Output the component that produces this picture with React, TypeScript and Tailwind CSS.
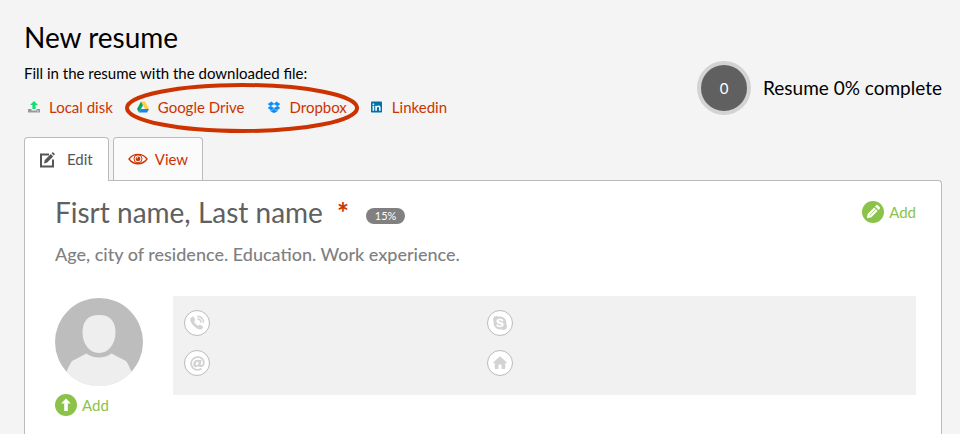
import type { ReactNode } from 'react';
import { FaAt, FaSkype } from 'react-icons/fa';
import { MdHome } from 'react-icons/md';

function LocalDiskIcon() {
  return (
    <svg viewBox="0 0 12 12" className="h-3 w-3">
      <path d="M6 0 10 4H7.600v4H4.400V4H2z" fill="#10e070" />
      <path d="M0 8h3.500v1.500h5V8H12v3.500H0z" fill="#999" />
      <path d="M9 9.600h1.600v.9H9z" fill="#ddd" />
    </svg>
  );
}

function DriveIcon() {
  return (
    <svg viewBox="0 0 12 12" className="h-3 w-3">
      <path d="M4 .5h4L12 8H8z" fill="#ffcf3f" />
      <path d="M4 .5 6 4.200 2 11.500 0 8z" fill="#11a15e" />
      <path d="M4 8h8l-2 3.500H2z" fill="#1a82f7" />
    </svg>
  );
}

function DropboxIcon() {
  return (
    <svg viewBox="0 0 12 12" className="h-3 w-3" fill="#0d8cf5" stroke="#0d8cf5" strokeWidth=".4">
      <path d="M3.500.8 6 2.900 2.500 5.100 0 3.100z" />
      <path d="M8.500.8 12 3.100 9.500 5.100 6 2.900z" />
      <path d="M2.500 5.100 6 7.300 3.500 9.300 0 7.100z" />
      <path d="M9.500 5.100 12 7.100 8.500 9.300 6 7.300z" />
      <path d="M6 8 8.500 10 9.600 9.400V10L6 12 2.400 10v-.6l1.100.6z" />
    </svg>
  );
}

function LinkedinIcon() {
  return (
    <svg viewBox="0 0 12 12" className="h-3 w-3">
      <rect x="0" y=".5" width="11" height="11" rx=".8" fill="#0072a8" />
      <path d="M1.600 4.700h1.600v5H1.600zM1.600 2.400h1.600V4H1.600z" fill="#fff" />
      <path d="M4.300 4.700h1.500v.7c.9-1.300 3.800-1.200 3.800 1.300v3H8V7c0-1.500-2.100-1.400-2.100 0v2.700H4.300z" fill="#fff" />
    </svg>
  );
}

function EditIcon() {
  return (
    <svg viewBox="0 0 16 16" className="h-4 w-4" fill="none" stroke="#555">
      <path d="M10 2.500H2v12h12V7.500" strokeWidth="2" />
      <path d="m5 11.500.8-3.500 6-6 2.400 2.400-6 6z" fill="#555" stroke="none" />
      <path d="m12.600 1.300 1.200-1.200L16 2.300l-1.200 1.200z" fill="#555" stroke="none" />
    </svg>
  );
}

function EyeIcon() {
  return (
    <svg viewBox="0 0 20 12" className="h-3 w-5" fill="none" stroke="#cc3300">
      <path d="M1 6C5.500-.3 14.500-.3 19 6 14.500 12.300 5.500 12.300 1 6z" strokeWidth="1.300" />
      <circle cx="10" cy="5.800" r="4" strokeWidth="1" />
      <circle cx="10" cy="5.800" r="2.400" fill="#cc3300" stroke="none" />
      <circle cx="9.200" cy="4.800" r=".7" fill="#fff" stroke="none" />
    </svg>
  );
}

function PhoneIcon() {
  return (
    <svg viewBox="0 0 16 16" className="h-4 w-4" fill="none" stroke="currentColor">
      <path
        d="M2.500 2.200C3.500 1.200 4.400 1.500 5 2.500l1 1.700c.4.700.2 1.400-.9 2.200.7 1.700 2.400 3.600 4.200 4.400.9-1 1.600-1.200 2.300-.8l1.800 1.200c.9.600 1.100 1.500.1 2.400-1.300 1.300-3.600 1.200-6.200-.6C4.300 11 2 8.300 1.400 5.800.9 4.100 1.500 3.100 2.500 2.200z"
        fill="currentColor"
        stroke="none"
      />
      <path d="M8.200 3.800c2.200.2 3.700 1.700 3.900 4" strokeWidth="1.500" />
      <path d="M8.200 1.200c3.700.2 6.200 2.700 6.400 6.600" strokeWidth="1.400" />
    </svg>
  );
}

function PencilBadge() {
  return (
    <svg viewBox="0 0 22 22" className="h-[22px] w-[22px]">
      <circle cx="11" cy="11" r="11" fill="#8bc34a" />
      <path d="m4.800 17.200 1-4.500 6.300-6.300 3.500 3.500-6.300 6.300z" fill="#fff" />
      <path d="m13 5.500 1.300-1.300a1 1 0 0 1 1.400 0l2.100 2.100a1 1 0 0 1 0 1.400L16.500 9z" fill="#fff" />
      <path d="m7.600 14.400 6-6" stroke="#8bc34a" strokeWidth=".7" />
    </svg>
  );
}

function UploadBadge() {
  return (
    <svg viewBox="0 0 22 22" className="h-[22px] w-[22px]">
      <circle cx="11" cy="11" r="11" fill="#8bc34a" />
      <path d="m11 4.500 4.800 5H12.800V17H9.200V9.500H6.200z" fill="#fff" />
    </svg>
  );
}

function Avatar() {
  return (
    <svg viewBox="0 0 88 88" className="h-[88px] w-[88px]" role="img" aria-label="Photo">
      <circle cx="44" cy="44" r="44" fill="#bdbdbd" />
      <path
        d="M44 17c11 0 16.500 6 16.500 17.500C60.500 46 53.500 55 44 55s-16.500-9-16.500-20.500C27.500 23 33 17 44 17z"
        fill="#eee"
      />
      <path
        d="M31.500 55.500c7 5.300 18 5.300 25 0L71 63c2 2.500 4 7 5.500 11A44 44 0 0 1 11.500 74C13 70 15 65.500 17 63z"
        fill="#eee"
      />
    </svg>
  );
}

function SourceLink({ icon, label }: { icon: ReactNode; label: string }) {
  return (
    <a href="#" className="flex items-center gap-[9px] text-[#cc3300]">
      {icon}
      {label}
    </a>
  );
}

const contacts = [
  { label: 'Phone', icon: <PhoneIcon /> },
  { label: 'Skype', icon: <FaSkype className="h-4 w-4" /> },
  { label: 'Email', icon: <FaAt className="h-[15px] w-[15px]" /> },
  { label: 'Address', icon: <MdHome className="h-[18px] w-[18px]" /> },
];

export default function App() {
  return (
    <div className="flex min-h-screen flex-col bg-[#f4f4f4] pr-[18px] pl-6 font-['Lato',sans-serif] text-[15px] text-black">
      <header className="flex items-end justify-between pt-[19px]">
        <div>
          <h1 className="text-[28px] leading-9">New resume</h1>
          <p className="mt-2 leading-5">Fill in the resume with the downloaded file:</p>
          <nav className="mt-3 flex items-center leading-6">
            <div className="ml-1">
              <SourceLink icon={<LocalDiskIcon />} label="Local disk" />
            </div>
            <div className="relative ml-6 flex items-center gap-6">
              <SourceLink icon={<DriveIcon />} label="Google Drive" />
              <SourceLink icon={<DropboxIcon />} label="Dropbox" />
              {/* Highlight around the cloud sources */}
              <div className="pointer-events-none absolute -inset-x-3 -top-3 -bottom-[14px]">
                <svg viewBox="0 0 234 50" preserveAspectRatio="none" className="h-full w-full" fill="none">
                  <ellipse cx="117" cy="25" rx="115" ry="23" stroke="#cc3300" strokeWidth="4" />
                </svg>
              </div>
            </div>
            <div className="ml-6">
              <SourceLink icon={<LinkedinIcon />} label="Linkedin" />
            </div>
          </nav>
        </div>
        <div className="mb-1 flex items-center gap-3">
          <div className="flex h-[54px] w-[54px] items-center justify-center rounded-full border-4 border-[#d3d3d3] bg-[#606060] text-white">
            0
          </div>
          <p className="text-[19px] leading-7">Resume 0% complete</p>
        </div>
      </header>

      <div className="mt-[18px] flex gap-1" role="tablist">
        <button
          type="button"
          role="tab"
          aria-selected="true"
          className="relative z-10 -mb-px flex h-11 items-center gap-3 rounded-t border border-b-0 border-[#bbb] bg-white pr-[15px] pl-[14px] text-[#555]"
        >
          <EditIcon />
          Edit
        </button>
        <button
          type="button"
          role="tab"
          aria-selected="false"
          className="flex h-[43px] items-center gap-[7px] rounded-t border border-b-0 border-[#bbb] bg-[#fbfbfb] px-[14px] text-[#cc3300]"
        >
          <EyeIcon />
          View
        </button>
      </div>

      <main className="flex-1 rounded-tr border border-b-0 border-[#bbb] bg-white pt-[11px] pr-[25px] pb-4 pl-[30px]">
        <div className="flex items-center justify-between">
          <div className="flex items-center">
            <h2 className="text-[28px] leading-10 text-[#606060]">Fisrt name, Last name</h2>
            <span className="ml-[14px] text-[28px] leading-10 font-bold text-[#cc3300]">*</span>
            <span className="mt-2 ml-[17px] rounded-full bg-[#808080] px-[9px] text-[11px] leading-4 text-white">15%</span>
          </div>
          <button type="button" className="flex items-center gap-[5px] text-[#8bc34a]">
            <PencilBadge />
            Add
          </button>
        </div>
        <p className="mt-2 text-lg leading-7 font-medium text-[#808080]">
          Age, city of residence. Education. Work experience.
        </p>

        <div className="mt-7 flex items-start gap-[30px]">
          <div className="mt-[2px] shrink-0">
            <Avatar />
            <button type="button" className="mt-2 flex items-center gap-[5px] text-[#8bc34a]">
              <UploadBadge />
              Add
            </button>
          </div>
          <ul className="grid flex-1 grid-cols-[303fr_429fr] gap-y-[14px] bg-[#f1f1f1] pt-[14px] pb-[19px] pl-[11px]">
            {contacts.map((contact) => (
              <li key={contact.label}>
                <span
                  title={contact.label}
                  className="flex h-[26px] w-[26px] items-center justify-center rounded-full border border-[#bbb] bg-white text-[#d3d3d3]"
                >
                  {contact.icon}
                </span>
              </li>
            ))}
          </ul>
        </div>
      </main>
    </div>
  );
}
